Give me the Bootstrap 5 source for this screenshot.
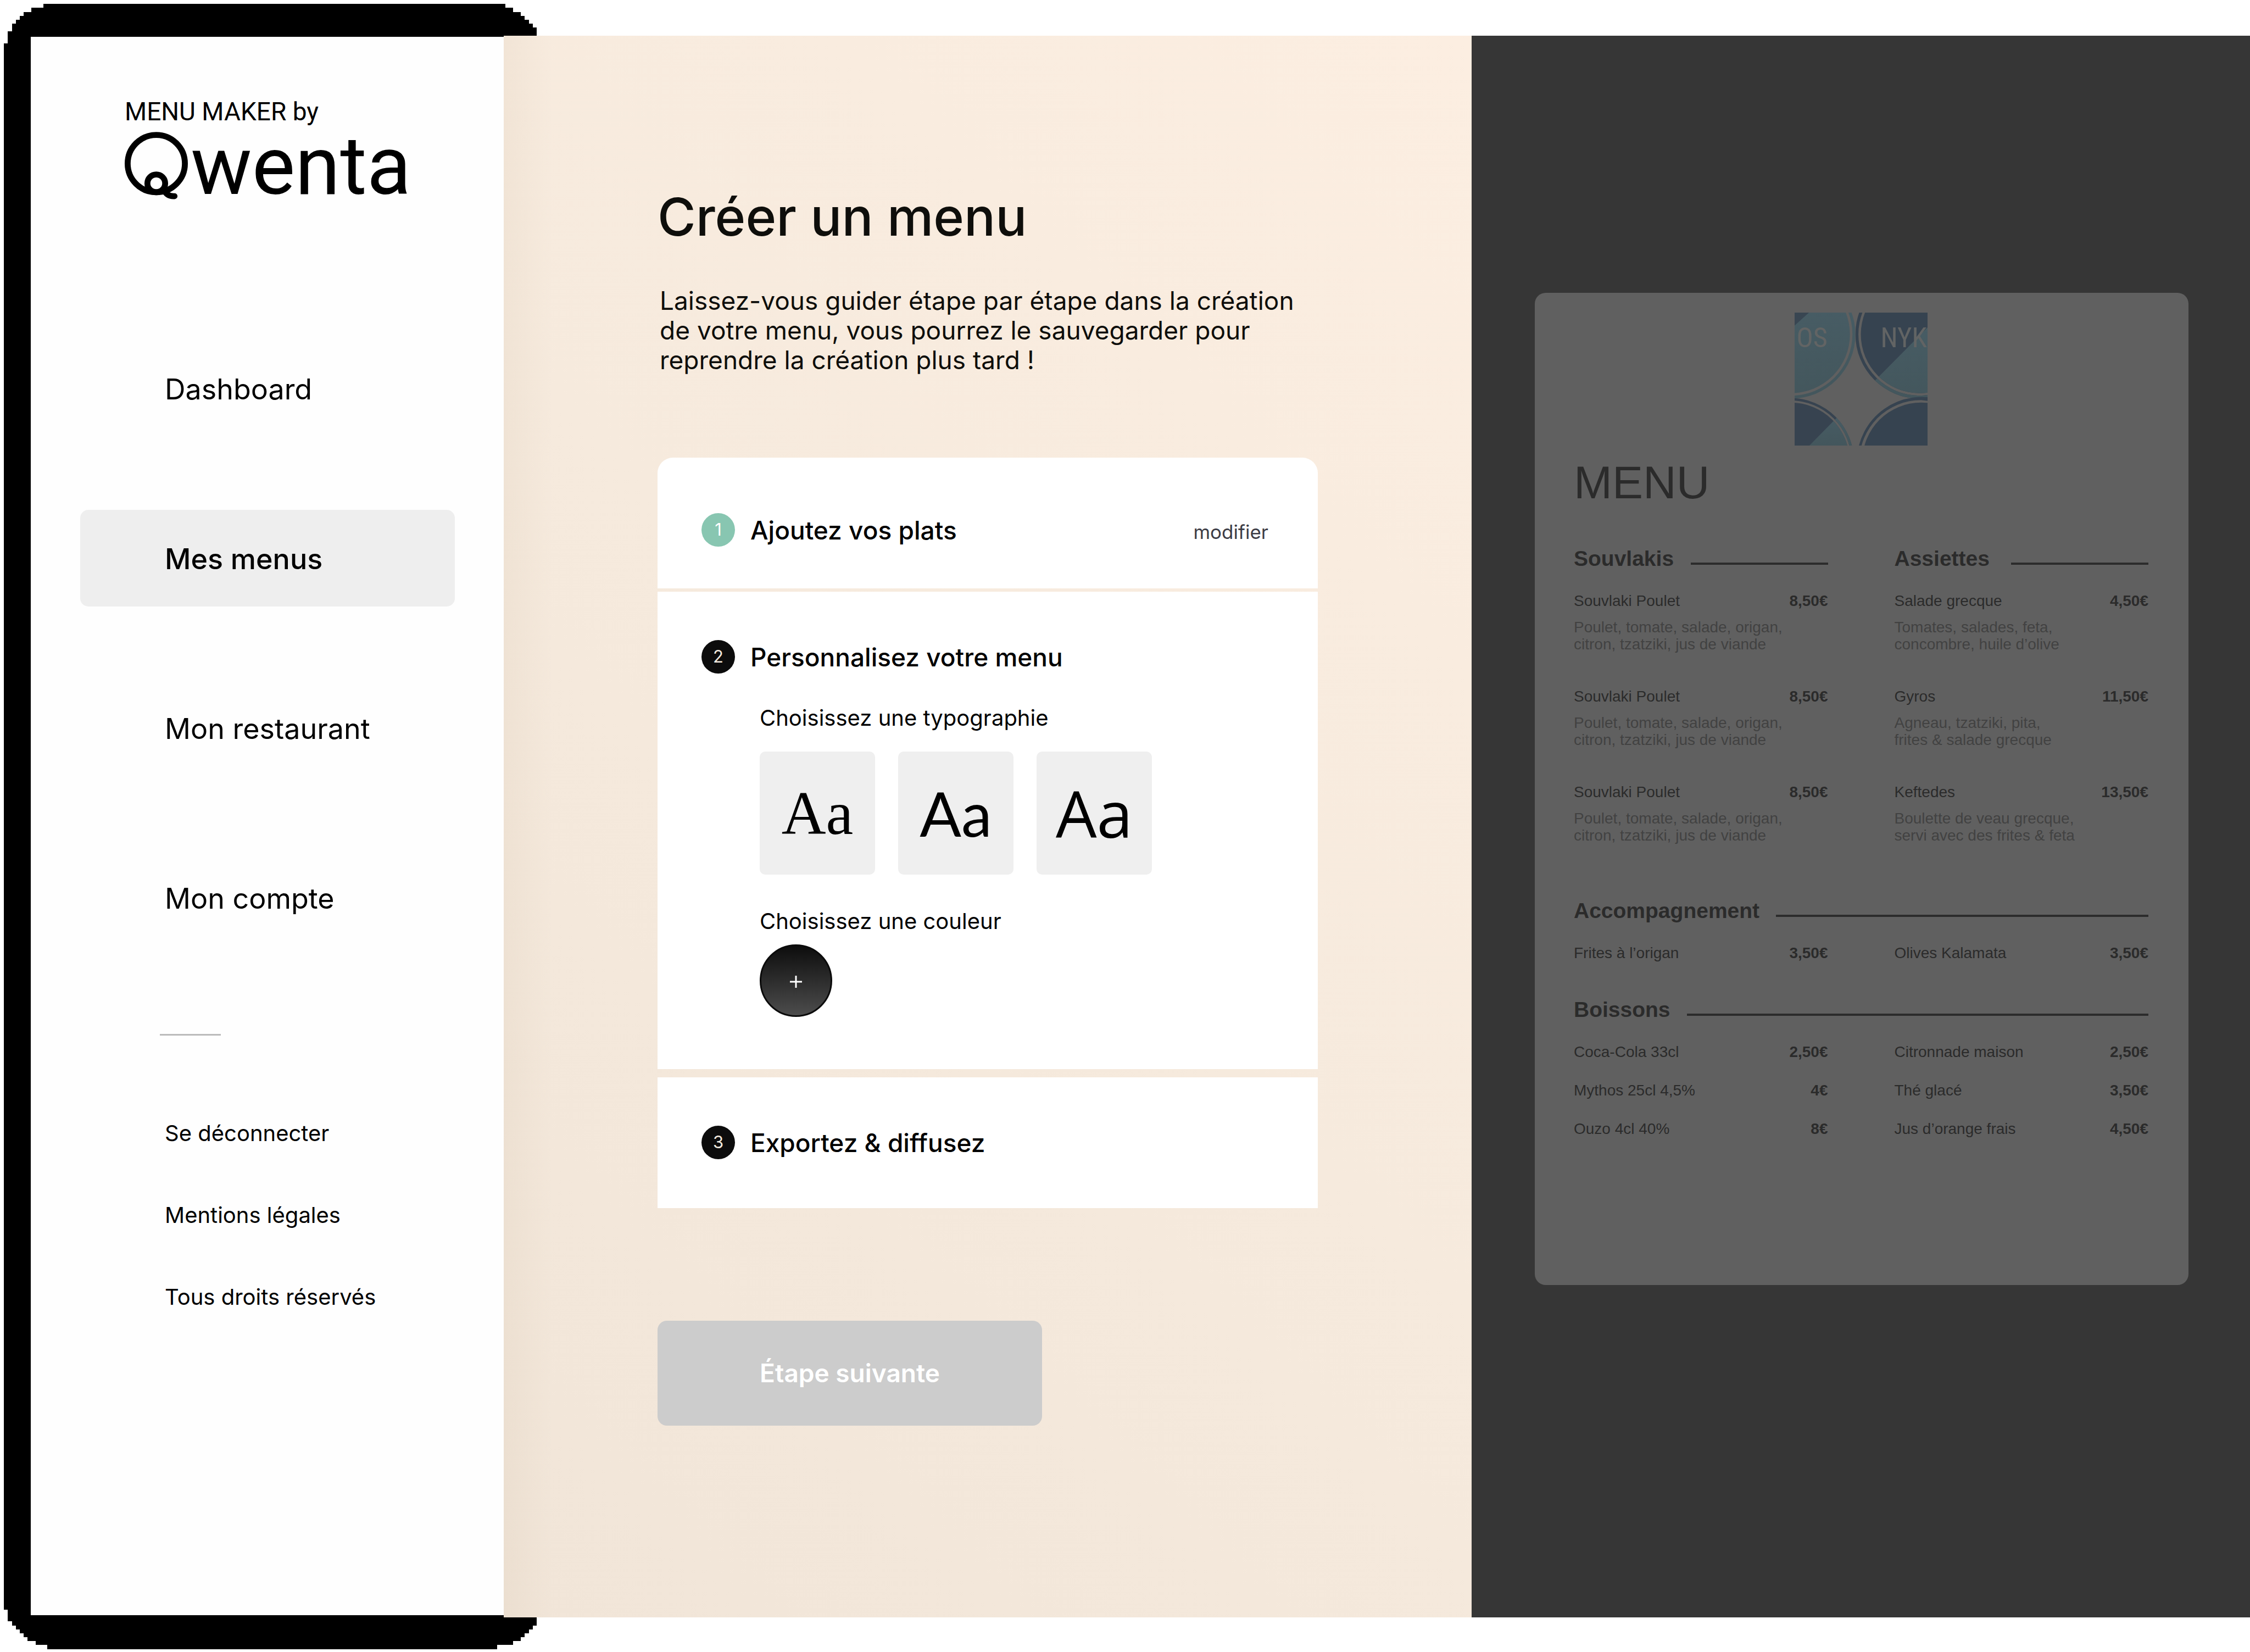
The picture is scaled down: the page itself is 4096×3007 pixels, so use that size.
<!DOCTYPE html>
<html lang="fr">
<head>
<meta charset="utf-8">
<meta name="viewport" content="width=device-width, initial-scale=1">
<title>Menu Maker by Qwenta</title>
<link href="https://cdn.jsdelivr.net/npm/bootstrap@5.3.0/dist/css/bootstrap.min.css" rel="stylesheet">
<style>
  body { font-family: Inter, "Open Sans", sans-serif; color: #000; background: #fff; }
  a { color: inherit; text-decoration: none; }
  .shell { min-height: 100vh; padding: 65px 0 63px 56px; }
  .backdrop { top: 0; left: 0; width: 977px; height: 100%; }

  /* Sidebar */
  .side { flex: 0 0 861px; margin: 2px 0 4px; padding: 111px 89px 0 90px; background: #fefefe; }
  .brand { display: block; margin-left: 81px; }
  .brand-top { font: 400 46px/50px Roboto, sans-serif; }
  .brand svg { display: block; width: 530px; height: 134px; margin-top: 5px; overflow: visible; }
  .main-nav { margin-top: 252px; gap: 133px; }
  .main-nav .nav-link { height: 176px; padding: 4px 0 0 154px; border-radius: 15px; font-size: 52px; line-height: 60px; color: #000; }
  .main-nav .nav-link.active { background: #eee; font-weight: 500; }
  .side-rule { width: 111px; height: 3px; margin: 160px 0 0 145px; background: #bbb; border: 0; opacity: 1; }
  .foot-nav { margin: 154px 0 0 154px; gap: 101px; font-size: 40px; line-height: 48px; }

  /* Creation area */
  .studio { padding: 275px 280px 0; color: #0e0e0b;
    background: linear-gradient(90deg, rgba(110,80,30,.045) 0, rgba(110,80,30,0) 90px), linear-gradient(45deg, #f1e5d8, #f6eadd 50%, #fceee1); }
  .studio h1 { margin: 0; font-size: 95px; line-height: 110px; font-weight: 500; }
  .intro { margin: 70px 0 151px; font-size: 46px; line-height: 54px; padding-left: 4px; }
  .step { background: #fff; padding: 88px 90px 89px 80px; }
  .step-first { border-radius: 28px 28px 0 0; padding-top: 101px; padding-bottom: 76px; }
  .step-current { margin-top: 6px; padding-bottom: 95px; }
  .step-last { margin-top: 15px; }
  .step-head { gap: 28px; height: 61px; }
  .step-no { width: 61px; height: 61px; border-radius: 50%; background: #0c0c0c; color: #f3eadf; font-size: 31px; }
  .step-no.done { background: #88c6b1; color: #fff; }
  .step-head h2 { margin: 0; font-size: 46px; line-height: 60px; font-weight: 500; color: #000; }
  .edit { font-size: 35px; color: #3c3c45; padding-top: 8px; }
  .step-body { margin: 59px 0 0 106px; color: #000; }
  .field-name { margin: 0; font-size: 40px; line-height: 44px; font-weight: 400; float: none; }
  .faces { gap: 42px; margin: 39px 0 63px; }
  .face { width: 210px; height: 224px; border-radius: 10px; background: #efefef; font-size: 112px; line-height: 120px; padding: 0; border: 0; color: #000; }
  .face-serif { font-family: "Liberation Serif", serif; }
  .face-light { font-family: Lato, sans-serif; font-weight: 400; }
  .face-sans { font-family: "Open Sans", sans-serif; font-weight: 500; font-size: 118px; }
  .pick { width: 132px; height: 132px; margin-top: 20px; padding: 3px 0 0; border: 3px solid #0b0b0b; border-radius: 50%; background: linear-gradient(#0d0d0d, #4c4c4c); color: #fff; }
  .next { width: 700px; height: 191px; margin-top: 205px; border: 0; border-radius: 17px; font-size: 46px; font-weight: 600; }
  .next:disabled { background: #ccc; color: #fff; opacity: 1; }

  /* Menu preview */
  .preview { flex: 0 0 1417px; padding: 468px 112px 0 115px; background: #363636; }
  .sheet { min-height: 1806px; padding: 36px 73px 0 71px; border-radius: 20px; background: #606060; color: #2b2b2b; font-family: "Liberation Sans", Arial, sans-serif; font-size: 28px; line-height: 32px; }
  .sheet svg { display: block; width: 242px; height: 242px; margin: 0 auto 19px; }
  .sheet h2 { margin: 0 0 69px; font-size: 84px; line-height: 96px; font-weight: 400; }
  .sheet h3 { margin: 0; font-size: 39px; line-height: 44px; font-weight: 700; }
  .sheet-cols { display: grid; grid-template-columns: 1fr 1fr; column-gap: 121px; }
  .sheet-title { margin-bottom: 39px; gap: 30px; }
  .sheet-title i { height: 4px; margin-bottom: 11px; background: #2c2c2c; }
  .sheet-title i.short { width: 250px; margin-left: auto; }
  .dish { margin-bottom: 64px; }
  .dish p { margin: 16px 0 0; line-height: 31px; color: #424242; }
  .sides { margin: 36px 0 65px; }
  .drinks { row-gap: 38px; }
</style>
</head>
<body>
<div class="shell position-relative d-flex">
  <svg class="backdrop position-absolute" viewBox="0 0 1088 3350" preserveAspectRatio="none" shape-rendering="crispEdges" aria-hidden="true">
    <path d="M88 8H1024V16H1040V24H1056V32H1064V40H1072V48H1080V56H1088V3296H1080V3304H1072V3312H1064V3320H1056V3328H1040V3336H1008V3344H96V3336H72V3328H56V3320H48V3312H40V3304H32V3296H24V3288H16V3264H8V88H16V64H24V48H32V40H40V32H48V24H64V16H88Z"/>
  </svg>

  <aside class="side position-relative">
    <a class="brand" href="#">
      <span class="brand-top d-block">MENU MAKER by</span>
      <svg viewBox="0 0 590 149" role="img" aria-label="Qwenta">
        <g fill="none" stroke="#000" stroke-width="12" stroke-linecap="round">
          <circle cx="64" cy="72" r="58"/>
          <circle cx="64" cy="112" r="18"/>
          <path d="M79 125Q86 139 101 138"/>
        </g>
        <text x="134" y="133" font-family="Roboto, sans-serif" font-size="165">wenta</text>
      </svg>
    </a>
    <nav class="main-nav nav flex-column" aria-label="Navigation principale">
      <a class="nav-link d-flex align-items-center" href="#">Dashboard</a>
      <a class="nav-link d-flex align-items-center active" aria-current="page" href="#">Mes menus</a>
      <a class="nav-link d-flex align-items-center" href="#">Mon restaurant</a>
      <a class="nav-link d-flex align-items-center" href="#">Mon compte</a>
    </nav>
    <hr class="side-rule">
    <div class="foot-nav d-flex flex-column">
      <a href="#">Se déconnecter</a>
      <a href="#">Mentions légales</a>
      <a href="#">Tous droits réservés</a>
    </div>
  </aside>

  <main class="studio position-relative flex-grow-1">
    <h1>Créer un menu</h1>
    <p class="intro">Laissez-vous guider étape par étape dans la création<br>de votre menu, vous pourrez le sauvegarder pour<br>reprendre la création plus tard !</p>

    <section class="step step-first">
      <div class="step-head d-flex align-items-center">
        <span class="step-no done d-flex align-items-center justify-content-center">1</span>
        <h2>Ajoutez vos plats</h2>
        <a class="edit ms-auto" href="#">modifier</a>
      </div>
    </section>
    <section class="step step-current">
      <div class="step-head d-flex align-items-center">
        <span class="step-no d-flex align-items-center justify-content-center">2</span>
        <h2>Personnalisez votre menu</h2>
      </div>
      <div class="step-body">
        <fieldset>
          <legend class="field-name">Choisissez une typographie</legend>
          <div class="faces d-flex">
            <input class="btn-check" type="radio" name="face" id="face1">
            <label class="face face-serif btn d-flex align-items-center justify-content-center" for="face1">Aa</label>
            <input class="btn-check" type="radio" name="face" id="face2">
            <label class="face face-light btn d-flex align-items-center justify-content-center" for="face2">Aa</label>
            <input class="btn-check" type="radio" name="face" id="face3">
            <label class="face face-sans btn d-flex align-items-center justify-content-center" for="face3">Aa</label>
          </div>
        </fieldset>
        <h3 class="field-name">Choisissez une couleur</h3>
        <button class="pick d-flex align-items-center justify-content-center" type="button" aria-label="Ajouter une couleur">
          <svg width="24" height="24" viewBox="0 0 24 24" stroke="#fff" stroke-width="3"><path d="M12 1V23M1 12H23"/></svg>
        </button>
      </div>
    </section>
    <section class="step step-last">
      <div class="step-head d-flex align-items-center">
        <span class="step-no d-flex align-items-center justify-content-center">3</span>
        <h2>Exportez &amp; diffusez</h2>
      </div>
    </section>
    <button class="next btn" type="button" disabled>Étape suivante</button>
  </main>

  <aside class="preview" aria-label="Aperçu du menu">
    <div class="sheet">
      <svg viewBox="0 0 269 269" aria-hidden="true">
        <defs>
          <clipPath id="frame"><rect width="269" height="269"/></clipPath>
          <clipPath id="tl"><circle cx="-7" cy="44" r="119"/><path d="M-7 -86A130 130 0 0 1 -7 174L-7 168A124 124 0 0 0 -7 -80Z"/></clipPath>
          <clipPath id="tr"><circle cx="253" cy="44" r="119"/><path d="M253 -86A130 130 0 0 0 253 174L253 168A124 124 0 0 1 253 -80ZM253 174A130 130 0 0 0 300 165L298 159A124 124 0 0 1 253 168Z"/></clipPath>
          <clipPath id="bl"><circle cx="-8" cy="301" r="119"/><path d="M-8 173A128 128 0 0 1 120 301L115 301A123 123 0 0 0 -8 178Z"/></clipPath>
          <clipPath id="br"><circle cx="256" cy="301" r="119"/><path d="M300 178A131 131 0 0 0 126 301L131 301A125 125 0 0 1 256 177L300 183Z"/></clipPath>
          <linearGradient id="teal" x2="0" y2="1"><stop stop-color="#475c64"/><stop offset="1" stop-color="#43565c"/></linearGradient>
        </defs>
        <g clip-path="url(#frame)">
          <g clip-path="url(#tl)"><rect width="130" height="180" fill="url(#teal)"/><path d="M0 0H29L0 26Z" fill="#394652"/></g>
          <g clip-path="url(#tr)"><rect x="120" width="149" height="180" fill="#364350"/><path d="M162 138L269 30V180H150Z" fill="url(#teal)"/></g>
          <g clip-path="url(#bl)"><rect y="170" width="130" height="99" fill="#374350"/><path d="M30 269L88 210H130V269Z" fill="url(#teal)"/></g>
          <g clip-path="url(#br)"><rect x="120" y="170" width="149" height="99" fill="#364350"/></g>
          <g fill="#626464" font-family="'Liberation Sans Narrow', 'Roboto Condensed', Roboto, sans-serif" font-size="56">
            <text x="4" y="70">OS</text>
            <text x="174" y="70">NYK</text>
          </g>
        </g>
      </svg>
      <h2>MENU</h2>
      <div class="sheet-cols">
        <section>
          <div class="sheet-title d-flex align-items-end"><h3>Souvlakis</h3><i class="short"></i></div>
          <div class="dish"><div class="d-flex justify-content-between"><span>Souvlaki Poulet</span><b>8,50€</b></div><p>Poulet, tomate, salade, origan,<br>citron, tzatziki, jus de viande</p></div>
          <div class="dish"><div class="d-flex justify-content-between"><span>Souvlaki Poulet</span><b>8,50€</b></div><p>Poulet, tomate, salade, origan,<br>citron, tzatziki, jus de viande</p></div>
          <div class="dish"><div class="d-flex justify-content-between"><span>Souvlaki Poulet</span><b>8,50€</b></div><p>Poulet, tomate, salade, origan,<br>citron, tzatziki, jus de viande</p></div>
        </section>
        <section>
          <div class="sheet-title d-flex align-items-end"><h3>Assiettes</h3><i class="short"></i></div>
          <div class="dish"><div class="d-flex justify-content-between"><span>Salade grecque</span><b>4,50€</b></div><p>Tomates, salades, feta,<br>concombre, huile d’olive</p></div>
          <div class="dish"><div class="d-flex justify-content-between"><span>Gyros</span><b>11,50€</b></div><p>Agneau, tzatziki, pita,<br>frites &amp; salade grecque</p></div>
          <div class="dish"><div class="d-flex justify-content-between"><span>Keftedes</span><b>13,50€</b></div><p>Boulette de veau grecque,<br>servi avec des frites &amp; feta</p></div>
        </section>
      </div>
      <section class="sides">
        <div class="sheet-title d-flex align-items-end"><h3>Accompagnement</h3><i class="flex-grow-1"></i></div>
        <div class="sheet-cols">
          <div class="d-flex justify-content-between"><span>Frites à l’origan</span><b>3,50€</b></div>
          <div class="d-flex justify-content-between"><span>Olives Kalamata</span><b>3,50€</b></div>
        </div>
      </section>
      <section>
        <div class="sheet-title d-flex align-items-end"><h3>Boissons</h3><i class="flex-grow-1"></i></div>
        <div class="sheet-cols drinks">
          <div class="d-flex justify-content-between"><span>Coca-Cola 33cl</span><b>2,50€</b></div>
          <div class="d-flex justify-content-between"><span>Citronnade maison</span><b>2,50€</b></div>
          <div class="d-flex justify-content-between"><span>Mythos 25cl 4,5%</span><b>4€</b></div>
          <div class="d-flex justify-content-between"><span>Thé glacé</span><b>3,50€</b></div>
          <div class="d-flex justify-content-between"><span>Ouzo 4cl 40%</span><b>8€</b></div>
          <div class="d-flex justify-content-between"><span>Jus d’orange frais</span><b>4,50€</b></div>
        </div>
      </section>
    </div>
  </aside>
</div>
<script src="https://cdn.jsdelivr.net/npm/bootstrap@5.3.0/dist/js/bootstrap.bundle.min.js"></script>
</body>
</html>
